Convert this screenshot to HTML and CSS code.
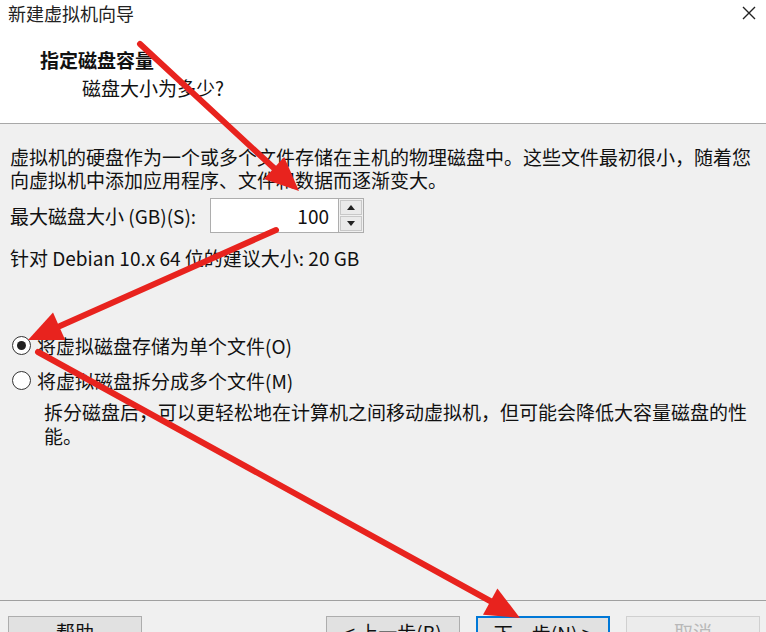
FILE: index.html
```html
<!DOCTYPE html>
<html lang="zh-CN">
<head>
    <meta charset="UTF-8">
    <title>新建虚拟机向导</title>
    <link rel="stylesheet" href="styles.css">
</head>
<body>
    <div class="wizard">
        <div class="titlebar">
            <span class="title">新建虚拟机向导</span>
            <span class="close">
                <svg width="16" height="16" viewBox="0 0 16 16"><path d="M2 2L14 14M14 2L2 14" stroke="#222" stroke-width="1.4"/></svg>
            </span>
        </div>

        <div class="header">
            <div class="header-title">指定磁盘容量</div>
            <div class="header-sub">磁盘大小为多少?</div>
        </div>

        <div class="content">
            <p class="intro">虚拟机的硬盘作为一个或多个文件存储在主机的物理磁盘中。这些文件最初很小，随着您向虚拟机中添加应用程序、文件和数据而逐渐变大。</p>

            <div class="size-row">
                <label>最大磁盘大小 (GB)(S):</label>
                <div class="spin">
                    <div class="spin-value">100</div>
                    <div class="spin-btns">
                        <span class="spin-btn"><i class="tri-up"></i></span>
                        <span class="spin-btn"><i class="tri-down"></i></span>
                    </div>
                </div>
            </div>

            <p class="hint">针对 Debian 10.x 64 位的建议大小: 20 GB</p>

            <div class="radio checked"><span class="dot"></span>将虚拟磁盘存储为单个文件(O)</div>
            <div class="radio second"><span class="dot"></span>将虚拟磁盘拆分成多个文件(M)</div>
            <p class="radio-desc">拆分磁盘后，可以更轻松地在计算机之间移动虚拟机，但可能会降低大容量磁盘的性能。</p>
        </div>

        <div class="footer">
            <button class="btn">帮助</button>
            <div class="spacer"></div>
            <button class="btn">&lt; 上一步(B)</button>
            <button class="btn primary">下一步(N) &gt;</button>
            <button class="btn faded">取消</button>
        </div>

        <!-- annotation arrows drawn over the dialog -->
        <svg class="arrows" width="766" height="632" viewBox="0 0 766 632">
            <g stroke="#e8231e" stroke-width="6" stroke-linecap="round">
                <line x1="140" y1="44" x2="276" y2="170"/>
                <line x1="276" y1="230" x2="60" y2="326"/>
                <line x1="38" y1="352" x2="492" y2="602"/>
            </g>
            <g fill="#e8231e">
                <polygon points="299,191 263.8,178.9 284.2,156.9"/>
                <polygon points="28,340 53,312.5 65.2,339.9"/>
                <polygon points="520,618 483,614.7 497.4,588.5"/>
            </g>
        </svg>
    </div>
</body>
</html>
```

FILE: styles.css
```css
html, body {
    margin: 0;
    padding: 0;
}
body {
    font-family: "Noto Sans CJK SC", "Microsoft YaHei", sans-serif;
    font-size: 19px;
    color: #111;
    background: #f0f0f0;
}
.wizard {
    position: relative;
    width: 766px;
    height: 632px;
    overflow: hidden;
    background: #f0f0f0;
}
.titlebar {
    height: 26px;
    display: flex;
    align-items: center;
    justify-content: space-between;
    background: #fff;
    padding: 0 8px;
}
.title {
    font-size: 18px;
    color: #222;
    line-height: 26px;
}
.close {
    display: flex;
    margin-right: 1px;
}
.header {
    height: 98px;
    background: #fff;
    border-bottom: 1px solid #a8a8a8;
    padding-left: 40px;
    box-sizing: border-box;
}
.header-title {
    font-weight: bold;
    line-height: 24px;
    padding-top: 22px;
}
.header-sub {
    line-height: 24px;
    padding-left: 42px;
    margin-top: 4px;
}
.content {
    height: 476px;
    box-sizing: border-box;
    padding: 21px 4px 0 10px;
}
p {
    margin: 0;
}
.intro {
    line-height: 23px;
}
.size-row {
    display: flex;
    align-items: center;
    margin-top: 7px;
}
.size-row label {
    width: 200px;
}
.spin {
    display: flex;
    height: 35px;
    border: 1px solid #adadad;
    box-sizing: border-box;
    background: #fff;
}
.spin-value {
    width: 118px;
    text-align: right;
    padding-right: 9px;
    line-height: 33px;
}
.spin-btns {
    display: flex;
    flex-direction: column;
    width: 22px;
    border-left: 1px solid #adadad;
    background: #f0f0f0;
    padding: 1px;
    gap: 1px;
}
.spin-btn {
    flex: 1;
    display: flex;
    align-items: center;
    justify-content: center;
    border: 1px solid #c8c8c8;
    background: #eaeaea;
}
.tri-up, .tri-down {
    width: 0;
    height: 0;
    border-left: 4px solid transparent;
    border-right: 4px solid transparent;
}
.tri-up { border-bottom: 5px solid #222; }
.tri-down { border-top: 5px solid #222; }
.hint {
    line-height: 23px;
    margin-top: 13px;
}
.radio {
    display: flex;
    align-items: center;
    line-height: 23px;
    margin-top: 65px;
}
.radio.second {
    margin-top: 12px;
}
.dot {
    width: 17px;
    height: 17px;
    border: 1px solid #333;
    border-radius: 50%;
    background: #fff;
    margin: 0 6px 0 2px;
    display: flex;
    align-items: center;
    justify-content: center;
}
.radio.checked .dot::after {
    content: "";
    width: 9px;
    height: 9px;
    border-radius: 50%;
    background: #222;
}
.radio-desc {
    line-height: 24px;
    margin: 8px 12px 0 34px;
}
.footer {
    display: flex;
    border-top: 1px solid #a0a0a0;
    padding: 15px 6px 0 8px;
    gap: 16px;
}
.spacer {
    flex: 1;
}
.btn {
    width: 134px;
    height: 32px;
    font-family: inherit;
    font-size: 19px;
    color: #111;
    background: #e1e1e1;
    border: 1px solid #adadad;
    padding: 0;
    line-height: 30px;
}
.btn.primary {
    border: 2px solid #0078d7;
}
.btn.faded {
    color: #b8b8b8;
    border-color: #d0d0d0;
    background: #ececec;
}
.arrows {
    position: absolute;
    left: 0;
    top: 0;
    pointer-events: none;
}
```
